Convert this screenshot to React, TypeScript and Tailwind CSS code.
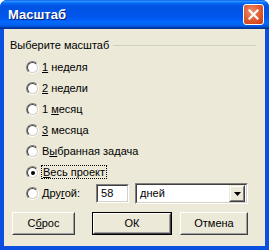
import React from 'react';

const titleGradient =
  'bg-[linear-gradient(to_bottom,#0058ee,#3593ff_4%,#288eff_6%,#127dff_8%,#036ffc_10%,#0262ee_14%,#0057e5_20%,#0054e3_24%,#0055eb_56%,#005bf5_66%,#026afe_76%,#0062ef_86%,#0052d6_92%,#0040ab_94%,#003092_100%)]';

const Radio: React.FC<{ checked?: boolean; children: React.ReactNode }> = ({ checked, children }) => (
  <div className="flex h-[21px] items-center">
    <span className="h-[13px] w-[13px] shrink-0 rounded-full border border-t-[#808080] border-l-[#808080] border-b-white border-r-white">
      <span className="flex h-full w-full items-center justify-center rounded-full border border-t-[#404040] border-l-[#404040] border-b-[#D4D0C8] border-r-[#D4D0C8] bg-white">
        {checked && <span className="h-[4px] w-[4px] rounded-full bg-black" />}
      </span>
    </span>
    <span className="ml-[3px]">{children}</span>
  </div>
);

const Button: React.FC<{ w: string; def?: boolean; children: React.ReactNode }> = ({ w, def, children }) => (
  <div className={`${w} h-[23px] ${def ? 'border border-black' : ''}`}>
    <div className="h-full w-full border border-t-white border-l-white border-b-[#404040] border-r-[#404040]">
      <div className="flex h-full w-full items-center justify-center border border-t-[#ECE9D8] border-l-[#ECE9D8] border-b-[#A0A0A0] border-r-[#A0A0A0] bg-[#ECE9D8]">
        {children}
      </div>
    </div>
  </div>
);

const Sunken: React.FC<{ className: string; children: React.ReactNode }> = ({ className, children }) => (
  <div className={`${className} border border-t-[#808080] border-l-[#808080] border-b-white border-r-white`}>
    <div className="flex h-full w-full items-center border border-t-[#404040] border-l-[#404040] border-b-[#D4D0C8] border-r-[#D4D0C8] bg-white">
      {children}
    </div>
  </div>
);

export default function App() {
  return (
    <div className="h-[250px] w-[269px] bg-white font-['Liberation_Sans',Arial,sans-serif] text-[11px] text-black">
      <div className="flex h-full w-full flex-col overflow-hidden rounded-t-[7px] bg-[#0A4FE0]">
        <div className={`flex h-[29px] shrink-0 items-center justify-between pl-[8px] pr-[5px] ${titleGradient}`}>
          <span className="text-[13px] font-bold text-white [text-shadow:1px_1px_#0A1E6E]">Масштаб</span>
          <div className="flex h-[21px] w-[21px] items-center justify-center rounded-[3px] border border-white bg-[radial-gradient(circle_at_40%_35%,#F0906A,#E0582E_55%,#C23A14)]">
            <svg width="11" height="11" viewBox="0 0 11 11">
              <path d="M1.5 1.5 L9.5 9.5 M9.5 1.5 L1.5 9.5" stroke="white" strokeWidth="2.2" strokeLinecap="square" />
            </svg>
          </div>
        </div>
        <div className="mx-[4px] mb-[4px] flex flex-1 flex-col bg-[#ECE9D8] px-[6px]">
          <div className="mt-[9px] flex h-[14px] items-center pr-[3px]">
            <span>Выберите масштаб</span>
            <span className="ml-[4px] h-px flex-1 bg-[#D0D0BF]" />
          </div>
          <div className="mt-[5px] flex flex-col pl-[16px]">
            <Radio>
              <span className="underline">1</span> неделя
            </Radio>
            <Radio>
              <span className="underline">2</span> недели
            </Radio>
            <Radio>
              1 <span className="underline">м</span>есяц
            </Radio>
            <Radio>
              <span className="underline">3</span> месяца
            </Radio>
            <Radio>
              В<span className="underline">ы</span>бранная задача
            </Radio>
            <Radio checked>
              <span className="-ml-px border border-dotted border-black px-px">
                <span className="underline">В</span>есь проект
              </span>
            </Radio>
            <div className="flex h-[21px] items-center">
              <Radio>
                Дру<span className="underline">г</span>ой:
              </Radio>
              <Sunken className="ml-[16px] h-[19px] w-[33px]">
                <span className="pl-[3px]">58</span>
              </Sunken>
              <Sunken className="ml-[6px] h-[21px] w-[113px]">
                <span className="flex-1 pl-[3px]">дней</span>
                <div className="mr-px h-[17px] w-[16px] border border-t-[#ECE9D8] border-l-[#ECE9D8] border-b-[#404040] border-r-[#404040]">
                  <div className="flex h-full w-full items-center justify-center border border-t-white border-l-white border-b-[#808080] border-r-[#808080] bg-[#ECE9D8]">
                    <svg width="7" height="4" viewBox="0 0 7 4">
                      <path d="M0 0 H7 L3.5 4 Z" fill="black" />
                    </svg>
                  </div>
                </div>
              </Sunken>
            </div>
          </div>
          <div className="mt-[8px] flex items-center pl-[2px]">
            <Button w="w-[63px]">
              С<span className="underline">б</span>рос
            </Button>
            <div className="ml-[17px]">
              <Button w="w-[80px]" def>
                ОК
              </Button>
            </div>
            <div className="ml-[8px]">
              <Button w="w-[68px]">Отмена</Button>
            </div>
          </div>
        </div>
      </div>
    </div>
  );
}
